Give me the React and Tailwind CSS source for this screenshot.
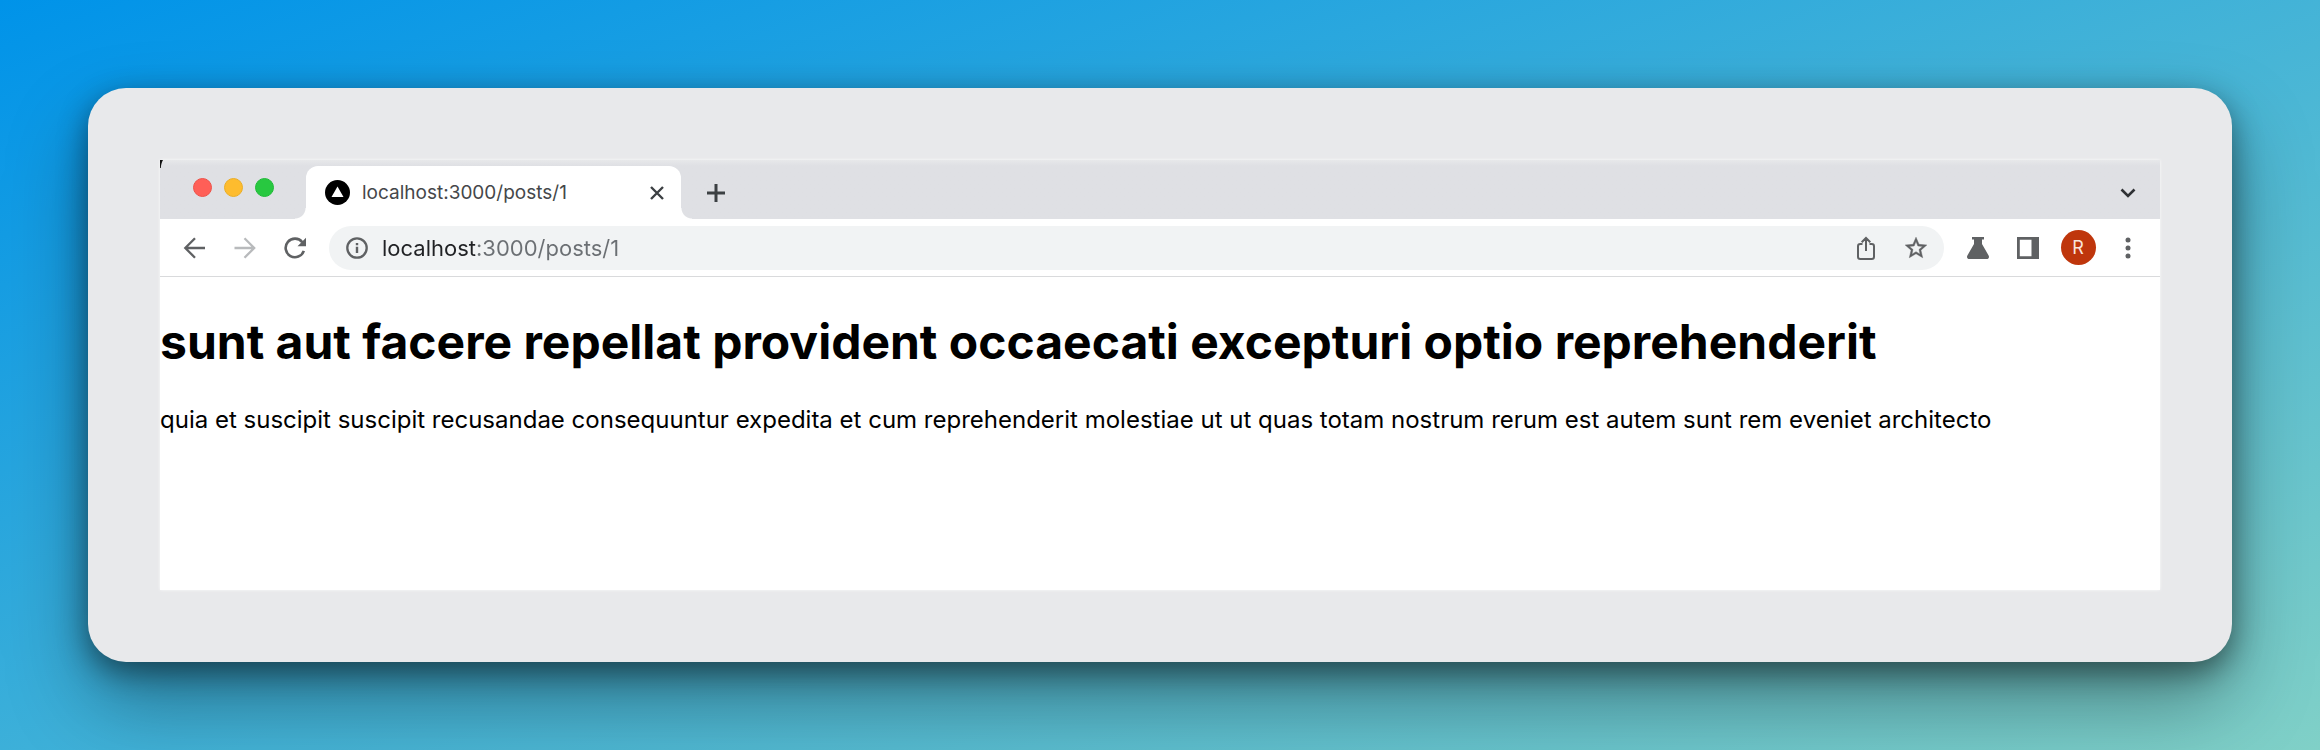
const ctl = "flex shrink-0 items-center justify-center";

function IconButton({ label, className = "", children }) {
  return (
    <button type="button" aria-label={label} className={`${ctl} h-10 w-10 ${className}`}>
      {children}
    </button>
  );
}

function TabStrip() {
  return (
    <div className="flex h-[59px] items-end bg-gradient-to-b from-[#e7e8ea] via-[#dfe0e4] via-[10%] to-[#dfe0e4]">
      <svg className="h-2 w-[3px] shrink-0 self-start" viewBox="0 0 3 8" aria-hidden="true">
        <path d="M0 0h3C1.700 2 1 5 .8 8H0z" fill="#111" />
      </svg>
      <div className="flex h-[59px] w-[132px] items-start gap-3 pt-[18px] pl-[30px]">
        <button type="button" aria-label="Close window" className="h-[19px] w-[19px] rounded-full border border-[#ee5249] bg-[#ff5f57]" />
        <button type="button" aria-label="Minimize window" className="h-[19px] w-[19px] rounded-full border border-[#eaae27] bg-[#febc2e]" />
        <button type="button" aria-label="Zoom window" className="h-[19px] w-[19px] rounded-full border border-[#1fbb37] bg-[#28c840]" />
      </div>
      <div className="h-[11px] w-[11px] bg-[radial-gradient(circle_at_top_left,transparent_10px,white_11px)]" />
      <div className="flex h-[53px] w-[375px] items-center rounded-t-xl bg-white pr-1 pl-[19px]">
        <svg className="h-[25px] w-[25px] shrink-0" viewBox="0 0 25 25" aria-hidden="true">
          <circle cx="12.5" cy="12.5" r="12.5" fill="#000" />
          <path d="M12.5 6.5l6 10.5h-12z" fill="#fff" />
        </svg>
        <span className="ml-3 grow text-[19px] leading-6 text-[#45474a]">localhost:3000/posts/1</span>
        <IconButton label="Close tab">
          <svg className="h-4 w-4" viewBox="0 0 16 16" fill="none" stroke="#3c4043" strokeWidth="2.4">
            <path d="M2 2l12 12M14 2L2 14" />
          </svg>
        </IconButton>
      </div>
      <div className="h-[11px] w-[11px] bg-[radial-gradient(circle_at_top_right,transparent_10px,white_11px)]" />
      <IconButton label="New tab" className="mb-1.5 ml-1">
        <svg className="h-5 w-5" viewBox="0 0 20 20" fill="none" stroke="#3c4043" strokeWidth="3">
          <path d="M10 1v18M1 10h18" />
        </svg>
      </IconButton>
      <IconButton label="Search tabs" className="mr-3 mb-1.5 ml-auto">
        <svg className="h-4 w-4" viewBox="0 0 16 16" fill="none" stroke="#2f3134" strokeWidth="2.6">
          <path d="M1.500 4.500L8 11l6.500-6.500" />
        </svg>
      </IconButton>
    </div>
  );
}

function Toolbar() {
  return (
    <div className="flex h-[58px] items-center border-b border-[#d9dadc] bg-white pr-3 pl-[15px]">
      <IconButton label="Back">
        <svg className="h-6 w-6" viewBox="0 0 24 24" fill="none" stroke="#5f6163" strokeWidth="2.3">
          <path d="M22 12H2.500M12 2.300L2.300 12l9.700 9.700" />
        </svg>
      </IconButton>
      <IconButton label="Forward" className="ml-2.5">
        <svg className="h-6 w-6" viewBox="0 0 24 24" fill="none" stroke="#b8babc" strokeWidth="2.3">
          <path d="M1.500 12h20M11.500 2.300l9.700 9.700-9.700 9.700" />
        </svg>
      </IconButton>
      <IconButton label="Reload" className="ml-2.5">
        <svg className="h-[22px] w-[22px]" viewBox="0 0 22 22">
          <path d="M18.300 5.200A9.300 9.300 0 1 0 19.800 13.800" fill="none" stroke="#5f6163" strokeWidth="2.600" />
          <path d="M22 .8V9.300H13.500z" fill="#5f6163" />
        </svg>
      </IconButton>
      <div className="ml-3.5 flex h-11 grow items-center rounded-full bg-[#f1f3f4] pr-2 pl-2">
        <IconButton label="View site information">
          <svg className="h-[22px] w-[22px]" viewBox="0 0 22 22">
            <circle cx="11" cy="11" r="9.700" fill="none" stroke="#5f6163" strokeWidth="2.300" />
            <path d="M9.800 9.700h2.400V16H9.800zM9.800 6h2.400v2.200H9.800z" fill="#5f6163" />
          </svg>
        </IconButton>
        <input
          type="text"
          aria-label="Address"
          defaultValue="localhost:3000/posts/1"
          className="ml-[5px] h-11 min-w-0 grow bg-linear-to-r from-[#202124] from-[94px] to-[#6b6f73] to-[94px] bg-clip-text text-[22px] leading-7 text-transparent outline-none"
        />
        <IconButton label="Share">
          <svg className="h-6 w-6" viewBox="0 0 24 24" fill="none" stroke="#5f6163" strokeWidth="2">
            <path d="M8.500 8H6.300A2.300 2.300 0 0 0 4 10.300v10.400A2.300 2.300 0 0 0 6.300 23h11.400a2.300 2.300 0 0 0 2.300-2.300V10.300A2.300 2.300 0 0 0 17.700 8H15.500M12 15V2.500M7.700 6.300L12 2l4.300 4.300" />
          </svg>
        </IconButton>
        <IconButton label="Bookmark this page" className="ml-2.5">
          <svg className="h-[26px] w-[26px]" viewBox="0 0 24 24" fill="#5f6163" stroke="#5f6163" strokeWidth="0.4">
            <path d="M22 9.240l-7.190-.62L12 2 9.190 8.630 2 9.240l5.460 4.730L5.820 21 12 17.270 18.180 21l-1.630-7.030L22 9.240zM12 15.400l-3.760 2.270 1-4.280-3.320-2.880 4.380-.38L12 6.100l1.710 4.040 4.380.38-3.320 2.880 1 4.280L12 15.400z" />
          </svg>
        </IconButton>
      </div>
      <div className="ml-3.5 flex items-center gap-2.5">
        <IconButton label="Labs">
          <svg className="h-[22px] w-[22px]" viewBox="0 0 22 22" fill="#5f6163">
            <path d="M5 0h12v2.500h-2V7l6.600 11.500c1 1.800 0 3.500-2 3.500H2.400c-2 0-3-1.700-2-3.500L7 7V2.500H5z" />
          </svg>
        </IconButton>
        <IconButton label="Side panel">
          <svg className="h-[22px] w-[22px]" viewBox="0 0 22 22" fill="#5f6163" fillRule="evenodd">
            <path d="M0 0h22v22H0zM2.800 2.800v16.400h11.700V2.800z" />
          </svg>
        </IconButton>
        <IconButton label="Profile">
          <span className="flex h-[35px] w-[35px] items-center justify-center rounded-full bg-[#bf360c] text-[18px] leading-6 text-[#f8e4dc]">R</span>
        </IconButton>
        <IconButton label="Menu">
          <svg className="h-[22px] w-[22px]" viewBox="0 0 22 22" fill="#5f6163">
            <circle cx="11" cy="3" r="2.500" />
            <circle cx="11" cy="11" r="2.500" />
            <circle cx="11" cy="19" r="2.500" />
          </svg>
        </IconButton>
      </div>
    </div>
  );
}

export default function App() {
  return (
    <div className="min-h-screen bg-[linear-gradient(160deg,#0093e9_0%,#80d0c7_100%)] p-[88px] font-['Inter','Liberation_Sans',sans-serif]">
      <div className="rounded-[38px] bg-[#e8e9eb] p-[72px] shadow-[0_40px_80px_rgba(0,0,0,0.35),0_10px_30px_rgba(0,0,0,0.45)]">
        <div className="bg-white shadow-[0_0_3px_rgba(255,255,255,0.8)]">
          <TabStrip />
          <Toolbar />
          <main className="pt-[35px] pb-[154px] text-black">
            <h1 className="text-[48px] leading-[60px] font-bold">sunt aut facere repellat provident occaecati excepturi optio reprehenderit</h1>
            <p className="mt-8 text-[24px] leading-8">
              quia et suscipit suscipit recusandae consequuntur expedita et cum reprehenderit molestiae ut ut quas totam nostrum rerum est autem sunt rem eveniet architecto
            </p>
          </main>
        </div>
      </div>
    </div>
  );
}
